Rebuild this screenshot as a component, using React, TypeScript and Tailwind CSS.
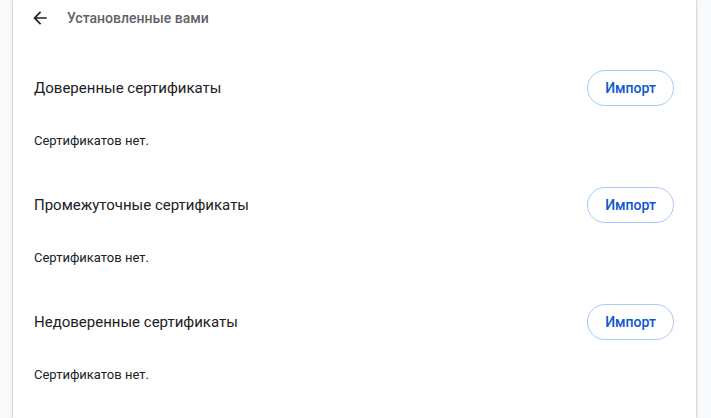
import React from 'react';

const sections = [
  { title: 'Доверенные сертификаты' },
  { title: 'Промежуточные сертификаты' },
  { title: 'Недоверенные сертификаты' },
];

function ArrowBack() {
  return (
    <svg width="20" height="20" viewBox="0 0 24 24" fill="currentColor">
      <path d="M20 11H7.83l5.59-5.59L12 4l-8 8 8 8 1.41-1.41L7.83 13H20v-2z" />
    </svg>
  );
}

export default function App() {
  return (
    <div className="w-[711px] h-[418px] overflow-hidden bg-[#f8f9fa] font-['Roboto',sans-serif]">
      <div className="ml-[13px] w-[683px] h-full bg-white shadow-[0_0_2px_rgba(60,64,67,0.3),0_1px_3px_1px_rgba(60,64,67,0.1)]">
        <div className="flex items-center h-9 pl-[17px]">
          <button className="flex items-center justify-center text-[#202124]">
            <ArrowBack />
          </button>
          <span className="ml-[17px] text-[14px] font-medium text-[#5f6368]">Установленные вами</span>
        </div>
        <div className="pt-6">
          {sections.map((s) => (
            <div key={s.title} className="pl-[21px] pr-[22px]">
              <div className="flex items-center justify-between h-14">
                <span className="text-[15px] text-[#202124]">{s.title}</span>
                <button className="h-9 w-[87px] rounded-full border border-[#a8c7fa] text-[14px] font-medium text-[#0b57d0]">
                  Импорт
                </button>
              </div>
              <div className="pt-[15px] pb-[26px] text-[13px] leading-5 text-[#202124]">Сертификатов нет.</div>
            </div>
          ))}
        </div>
      </div>
    </div>
  );
}
